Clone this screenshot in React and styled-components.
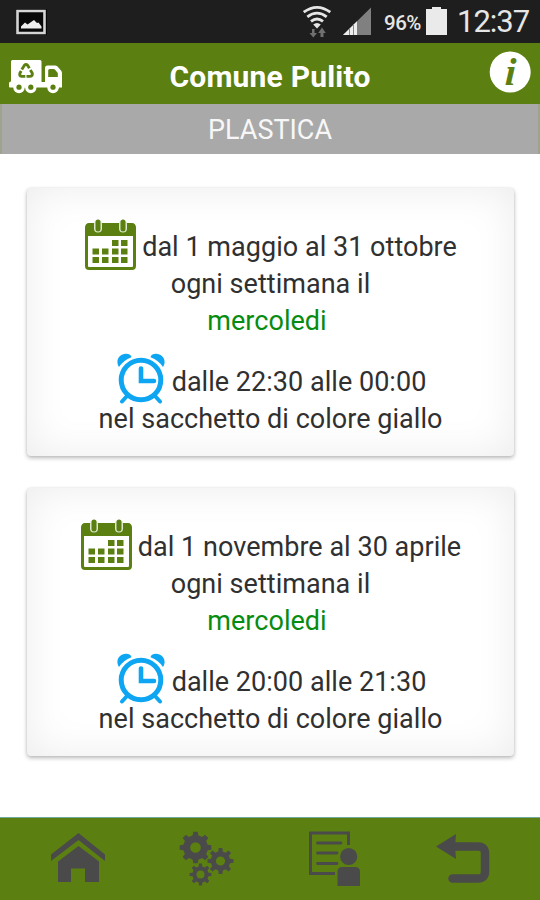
import React from 'react';
import styled, { createGlobalStyle } from 'styled-components'

const GlobalStyle = createGlobalStyle`
    body {
        margin: 0;
        background: #fff;
        font-family: Roboto, "Liberation Sans", sans-serif;
    }
    * {
        box-sizing: border-box;
    }
    svg {
        display: block;
        flex: none;
    }
`

const Screen = styled.div`
    display: flex;
    flex-direction: column;
    width: 540px;
    height: 900px;
    overflow: hidden;
`

const StatusBar = styled.div`
    display: flex;
    justify-content: space-between;
    height: 43px;
    padding: 0 10px 0 15px;
    background: #1e1e1e;
    color: #e6e6e6;
`

const StatusGroup = styled.div`
    display: flex;
    height: 43px;
`

const SignalSlot = styled.div`
    margin: 0 13px 0 11px;
`

const Battery = styled.span`
    width: 42px;
    font-size: 20.5px;
    font-weight: 500;
    line-height: 46px;
    letter-spacing: -0.5px;
    white-space: nowrap;
`

const Clock = styled.span`
    width: 73px;
    margin-left: 10px;
    font-size: 31px;
    line-height: 43px;
    letter-spacing: -1px;
    white-space: nowrap;
`

const Header = styled.header`
    display: flex;
    height: 61px;
    padding: 0 9px;
    background: #5b8011;
    color: #fff;
`

const Title = styled.h1`
    flex: 1;
    margin: 0 0 0 -12px;
    font-size: 30px;
    font-weight: 700;
    line-height: 68px;
    letter-spacing: 0.2px;
    text-align: center;
`

const Category = styled.h2`
    height: 50px;
    margin: 0;
    border: solid #9da38d;
    border-width: 0 2px;
    background: #a9a9a9;
    color: #f7f7f7;
    font-size: 27px;
    font-weight: 400;
    line-height: 52px;
    text-align: center;
`

const Content = styled.main`
    display: flex;
    flex: 1;
    flex-direction: column;
    gap: 32px;
    padding: 34px 26px 0 27px;
`

const Card = styled.section`
    height: 268px;
    padding-top: 31px;
    border-radius: 4px;
    background: #fff;
    box-shadow: 0 2px 4px rgba(0, 0, 0, 0.28), 0 0 2px rgba(0, 0, 0, 0.08), inset 0 0 42px rgba(0, 0, 0, 0.08);
    color: #303030;
    font-size: 27px;
    line-height: 37px;
    letter-spacing: 0.03px;
    text-align: center;
`

const Line = styled.div``

const Day = styled(Line)`
    padding-right: 7px;
    color: #078c12;
`

const IconLine = styled.div`
    display: flex;
    align-items: flex-end;
    justify-content: center;
    gap: 6px;
    height: ${props => props.$tall ? '61px' : '47px'};
    padding-left: 1px;

    svg {
        margin-bottom: ${props => props.$tall ? '-3px' : '-4px'};
    }
`

const Footer = styled.nav`
    display: grid;
    grid-template-columns: repeat(4, 128px);
    justify-content: center;
    height: 83px;
    padding-top: 12px;
    border-top: 1px solid #72aaa0;
    background: #5b8011;
`

const NavItem = styled.a`
    display: flex;
    justify-content: center;
    color: #4a4a4a;
`

function PictureIcon() {
    return (
        <svg width="32" height="43" viewBox="15 0 32 43">
            <path d="M16 9h31v26H16z" fill="#080808" />
            <path d="M17.500 11h27v22h-27z" fill="none" stroke="#d5d5d5" strokeWidth="2.6" />
            <path d="M21 28.500v-2l4-4 2.500 2L34 20l3 3 1.500-.5 3 4v2z" fill="#ededed" />
        </svg>
    );
}

function WifiIcon() {
    return (
        <svg width="30" height="43" viewBox="302 0 30 43">
            <path d="M312 29h2.500v4h2.500L313.300 37.500 309.500 33h2.500zM320.500 37h3v-4h2.300L322 27.500 318.200 33h2.300z" fill="#707070" />
            <g fill="none" stroke="#e5e5e5" strokeWidth="2.8">
                <path d="M303.700 12.200Q317 2.500 330.300 12.200" />
                <path d="M307.300 16.800Q317 9.500 326.700 16.800" />
                <path d="M311 21.400Q317 16.500 323 21.400" />
            </g>
            <path d="M313.200 24.600Q317 21.500 320.800 24.600L317 28.500z" fill="#e5e5e5" />
        </svg>
    );
}

function SignalIcon() {
    return (
        <svg width="28" height="43" viewBox="342 0 28 43">
            <path d="M342 35L370 7.500V35z" fill="#808080" />
            <path d="M342 35L356 21.200V35z" fill="#eee" />
            <path d="M348.500 28v7M352.500 24v11" stroke="#888" />
        </svg>
    );
}

function BatteryIcon() {
    return (
        <svg width="21" height="43" viewBox="426 0 21 43">
            <path d="M426 9h6V7h9v2h6v26h-21z" fill="#eaeaea" />
        </svg>
    );
}

function TruckIcon() {
    return (
        <svg width="54" height="61" viewBox="9 43 54 61">
            <path d="M11 61.500q0-1.500 1.500-1.500H40q1.500 0 1.500 1.500V82H45V68q0-2.500 2.500-2.500H55q1.500 0 2.500 1l3.500 4q1 1 1 2.500v14.500h-3v1h-11v-1H10q-1 0-1-1V83q0-1.500 2-1.500z" fill="#fff" />
            <path d="M48.200 70.500q0-1.500 1.500-1.500h3.800q1 0 1.800 1l2.500 3v4h-9.600z" fill="#5b8011" />
            <g fill="#fff">
                <circle cx="19" cy="87.500" r="5.700" />
                <circle cx="30.800" cy="87.500" r="5.700" />
                <circle cx="53" cy="87.500" r="5.700" />
            </g>
            <g fill="#5b8011">
                <circle cx="19" cy="87.200" r="2.600" />
                <circle cx="30.800" cy="87.200" r="2.600" />
                <circle cx="53" cy="87.200" r="2.600" />
            </g>
            <g fill="none" stroke="#5b8011" strokeWidth="2.900">
                <path d="M21.800 69.500l2.600-4.200q1.600-1.600 3.200 0l1.800 3" />
                <path d="M30.300 70l1.900 3q.8 3-2 3.400h-3.700" />
                <path d="M25.300 76.400h-3.600q-2.800-.6-1.700-3.400l1.200-2" />
            </g>
        </svg>
    );
}

function InfoIcon() {
    return (
        <svg width="42" height="61" viewBox="489 43 42 61">
            <circle cx="510.200" cy="72" r="20.500" fill="#fff" />
            <text
                transform="translate(509.800 85) skewX(-3)"
                textAnchor="middle"
                fill="#5b8011"
                fontFamily="Liberation Serif, serif"
                fontSize="39"
                fontStyle="italic"
                fontWeight="700"
            >
                i
            </text>
        </svg>
    );
}

// day squares of the calendar, the first two of the top row are empty
const days = [
    [27, 21], [36, 21],
    [7.5, 29.5], [17, 29.5], [27, 29.5], [36, 29.5],
    [7.5, 38], [17, 38], [27, 38], [36, 38],
]

function CalendarIcon() {
    return (
        <svg width="51" height="51" viewBox="0 0 51 51">
            <rect x="1.500" y="6" width="48" height="43.500" rx="2.500" fill="#fff" stroke="#5b8011" strokeWidth="3" />
            <path d="M1 17V7q0-3 3-3h43q3 0 3 3v10z" fill="#5b8011" />
            <g stroke="#dfe8cf" strokeWidth="8" strokeLinecap="round">
                <path d="M13 5v4.500M38 5v4.500" />
            </g>
            <g stroke="#5b8011" strokeWidth="5" strokeLinecap="round">
                <path d="M13 3v7M38 3v7" />
            </g>
            {days.map(([x, y]) => (
                <rect key={`${x}-${y}`} x={x} y={y} width="6.500" height="6" fill="#5b8011" />
            ))}
        </svg>
    );
}

function AlarmIcon() {
    return (
        <svg width="50" height="51" viewBox="0 0 50 51">
            <g fill="none" stroke="#0ea6f2">
                <circle cx="25" cy="27" r="19.800" strokeWidth="5" />
                <path d="M25 15.500V28h13" strokeWidth="4.600" strokeLinecap="round" />
                <path d="M11 43l-5 5.500M39 43l5 5.500" strokeWidth="4" strokeLinecap="round" />
            </g>
            <path d="M3 14C-1 8 3 .8 10 .8q5 .2 5.500 3.400Q7 7.500 3 14zM47 14C51 8 47 .8 40 .8q-5 .2-5.500 3.400Q43 7.500 47 14z" fill="#0ea6f2" />
        </svg>
    );
}

function HomeIcon() {
    return (
        <svg width="56" height="58" viewBox="50 830 56 58" fill="currentColor">
            <path d="M78.500 833L105 854.500V861L78.500 840 51 861v-6.500z" />
            <path d="M58 861.500L78.500 846 99 861.500V882H85v-13.500H71V882H58z" />
        </svg>
    );
}

// outline of a toothed wheel with a round hole in it
function gearPath(cx, cy, outer, inner, hole, teeth) {
    const step = Math.PI * 2 / teeth
    const point = (r, a) => `${(cx + r * Math.cos(a)).toFixed(2)} ${(cy + r * Math.sin(a)).toFixed(2)}`
    const points = []
    for (let i = 0; i < teeth; i++) {
        const a = i * step - Math.PI / 2
        points.push(point(inner, a - step * 0.29), point(outer, a - step * 0.18))
        points.push(point(outer, a + step * 0.18), point(inner, a + step * 0.29))
    }
    return `M${points.join('L')}ZM${cx - hole} ${cy}a${hole} ${hole} 0 1 0 ${hole * 2} 0a${hole} ${hole} 0 1 0 ${-hole * 2} 0Z`
}

function GearsIcon() {
    return (
        <svg width="56" height="58" viewBox="178 830 56 58" fill="currentColor" fillRule="evenodd">
            <path d={gearPath(195.5, 847.5, 16, 12.5, 5.3, 8)} />
            <path d={gearPath(220.5, 861, 13.2, 9.8, 4.6, 8)} />
            <path d={gearPath(200.5, 874.5, 11, 8.2, 4, 8)} />
        </svg>
    );
}

function ReportIcon() {
    return (
        <svg width="56" height="58" viewBox="306 830 56 58" fill="none" stroke="currentColor">
            <path d="M348.500 845v-12H310.500v40.500H335" strokeWidth="3" />
            <path d="M317.500 843H341M317.500 853H337M317.500 863.500H337" strokeWidth="2.800" strokeLinecap="round" />
            <circle cx="348.700" cy="856.500" r="8.600" fill="currentColor" stroke="none" />
            <path d="M337.500 886v-14q0-5 5-5h12.500q5 0 5 5v14z" fill="currentColor" stroke="none" />
        </svg>
    );
}

function BackIcon() {
    return (
        <svg width="56" height="58" viewBox="434 830 56 58">
            <path d="M452 846.500h26q7 0 7 7v18q0 7-7 7h-25.500" fill="none" stroke="currentColor" strokeWidth="8.500" strokeLinecap="round" />
            <path d="M436 846.500L456 834l-1 12.500 1 12.500z" fill="currentColor" />
        </svg>
    );
}

const periods = [
    { dates: 'dal 1 maggio al 31 ottobre', hours: 'dalle 22:30 alle 00:00' },
    { dates: 'dal 1 novembre al 30 aprile', hours: 'dalle 20:00 alle 21:30' },
]

function PeriodCard({ dates, hours }) {
    return (
        <Card>
            <IconLine>
                <CalendarIcon />
                <span>{dates}</span>
            </IconLine>
            <Line>ogni settimana il</Line>
            <Day>mercoledi</Day>
            <IconLine $tall>
                <AlarmIcon />
                <span>{hours}</span>
            </IconLine>
            <Line>nel sacchetto di colore giallo</Line>
        </Card>
    );
}

function App() {
    return (
        <Screen>
            <GlobalStyle />
            <StatusBar>
                <PictureIcon />
                <StatusGroup>
                    <WifiIcon />
                    <SignalSlot>
                        <SignalIcon />
                    </SignalSlot>
                    <Battery>96%</Battery>
                    <BatteryIcon />
                    <Clock>12:37</Clock>
                </StatusGroup>
            </StatusBar>
            <Header>
                <TruckIcon />
                <Title>Comune Pulito</Title>
                <InfoIcon />
            </Header>
            <Category>PLASTICA</Category>
            <Content>
                {periods.map(period => (
                    <PeriodCard key={period.dates} {...period} />
                ))}
            </Content>
            <Footer>
                <NavItem><HomeIcon /></NavItem>
                <NavItem><GearsIcon /></NavItem>
                <NavItem><ReportIcon /></NavItem>
                <NavItem><BackIcon /></NavItem>
            </Footer>
        </Screen>
    );
}

export default App;
